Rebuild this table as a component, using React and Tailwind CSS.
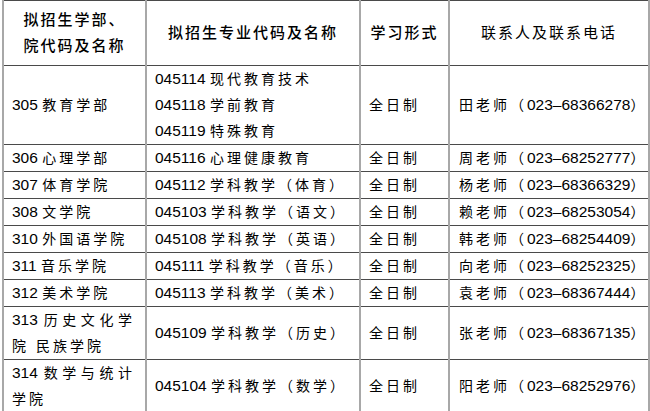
const font = { fontFamily: '"Liberation Sans", "Noto Sans CJK SC", sans-serif' };

const zh = "tracking-[3px] text-[14px]";
const cell = "border-y border-y-[#4a4a4a] border-x-2 border-x-[#a8a8a8] align-middle";
const head = `${cell} text-center text-[15px] tracking-[2px]`;
const spread = "text-justify [text-align-last:justify]";

const rows = [
  ["306", "心理学部", "045116", "心理健康教育", "周", "68252777"],
  ["307", "体育学院", "045112", "学科教学（体育）", "杨", "68366329"],
  ["308", "文学院", "045103", "学科教学（语文）", "赖", "68253054"],
  ["310", "外国语学院", "045108", "学科教学（英语）", "韩", "68254409"],
  ["311", "音乐学院", "045111", "学科教学（音乐）", "向", "68252325"],
  ["312", "美术学院", "045113", "学科教学（美术）", "袁", "68367444"],
];

const Contact = ({ name, tel }) => (
  <td className={`${cell} pl-[9px]`}>
    <span className={zh}>{name}老师（</span>
    <span>023–{tel}</span>
    <span className="text-[14px]">）</span>
  </td>
);

const Mode = () => (
  <td className={`${cell} pl-[8px]`}>
    <span className={zh}>全日制</span>
  </td>
);

export default function App() {
  return (
    <div className="w-[650px] h-[411px] bg-white overflow-hidden text-black" style={font}>
      <table className="ml-[2px] w-[646px] table-fixed border-collapse text-[15.5px] leading-[26px]">
        <colgroup>
          <col className="w-[143px]" />
          <col className="w-[214px]" />
          <col className="w-[89px]" />
          <col className="w-[200px]" />
        </colgroup>
        <tbody>
          <tr className="h-[65px]">
            <th className={`${head} font-medium`}>
              拟招生学部、
              <br />
              院代码及名称
            </th>
            <th className={`${head} font-medium`}>拟招生专业代码及名称</th>
            <th className={`${head} font-medium`}>学习形式</th>
            <th className={`${head} font-normal`}>联系人及联系电话</th>
          </tr>
          <tr className="h-[79px]">
            <td className={`${cell} pl-[8px]`}>
              305 <span className={zh}>教育学部</span>
            </td>
            <td className={`${cell} pl-[8px]`}>
              <div>
                045114 <span className={zh}>现代教育技术</span>
              </div>
              <div>
                045118 <span className={zh}>学前教育</span>
              </div>
              <div>
                045119 <span className={zh}>特殊教育</span>
              </div>
            </td>
            <Mode />
            <Contact name="田" tel="68366278" />
          </tr>
          {rows.map(([code, dept, mcode, major, name, tel]) => (
            <tr key={code} className="h-[27px]">
              <td className={`${cell} pl-[8px]`}>
                {code} <span className={zh}>{dept}</span>
              </td>
              <td className={`${cell} pl-[8px]`}>
                {mcode} <span className={zh}>{major}</span>
              </td>
              <Mode />
              <Contact name={name} tel={tel} />
            </tr>
          ))}
          <tr className="h-[53px]">
            <td className={`${cell} pl-[8px] pr-[10px]`}>
              <div className={spread}>
                313 <span className={zh}>历史文化学</span>
              </div>
              <div>
                <span className={zh}>院 民族学院</span>
              </div>
            </td>
            <td className={`${cell} pl-[8px]`}>
              045109 <span className={zh}>学科教学（历史）</span>
            </td>
            <Mode />
            <Contact name="张" tel="68367135" />
          </tr>
          <tr className="h-[52px]">
            <td className={`${cell} pl-[8px] pr-[10px]`}>
              <div className={spread}>
                314 <span className={zh}>数学与统计</span>
              </div>
              <div>
                <span className={zh}>学院</span>
              </div>
            </td>
            <td className={`${cell} pl-[8px]`}>
              045104 <span className={zh}>学科教学（数学）</span>
            </td>
            <Mode />
            <Contact name="阳" tel="68252976" />
          </tr>
        </tbody>
      </table>
    </div>
  );
}
